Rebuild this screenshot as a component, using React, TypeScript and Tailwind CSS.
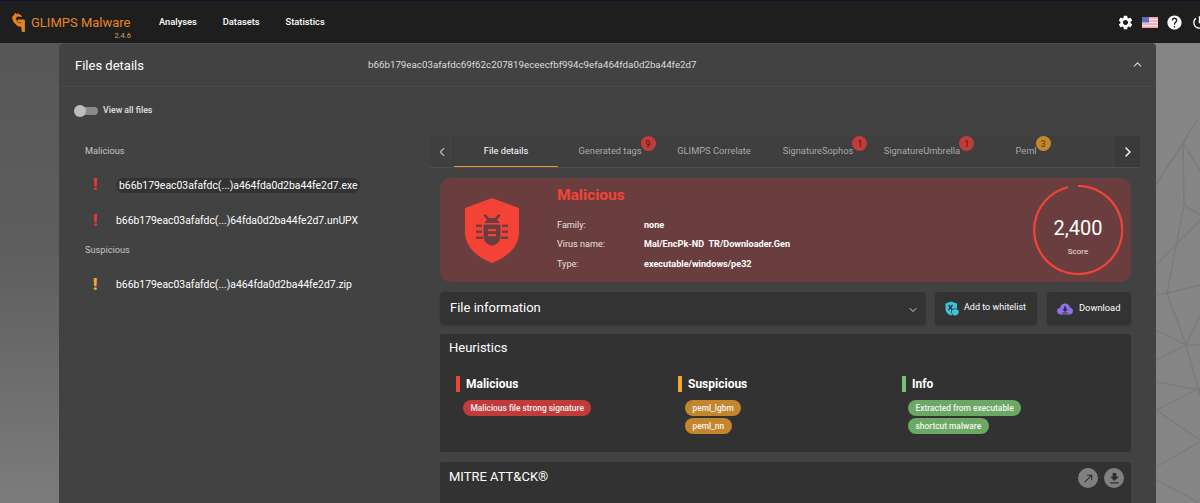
import { ChevronDown, ChevronLeft, ChevronRight, ChevronUp } from "lucide-react";
import { MdSettings, MdHelp, MdPowerSettingsNew, MdFileDownload, MdCallMade } from "react-icons/md";

function Tab({ label, n, color, text, active }: { label: string; n?: number; color?: string; text?: string; active?: boolean }) {
  return (
    <div className={`w-[104px] h-full shrink-0 flex items-center justify-center text-[9.3px] border-b-[1.5px] ${active ? "text-white border-b-[#e8952a]" : "text-[#a8a8a8] border-b-transparent"}`}>
      <span className="relative leading-[14px] whitespace-nowrap">
        {label}
        {n !== undefined ? (
          <span className={`absolute -top-[8px] -right-[14px] w-[15px] h-[15px] rounded-full flex items-center justify-center text-[8.5px] ${color} ${text}`}>
            {n}
          </span>
        ) : null}
      </span>
    </div>
  );
}

function FileRow({ name, color, pill }: { name: string; color: string; pill?: boolean }) {
  return (
    <div className="flex items-center h-[36px]">
      <span className={`w-[14px] ml-[29px] text-center font-black text-[17px] ${color}`}>!</span>
      {pill ? (
        <span className="text-[10.4px] text-white bg-[#333333] rounded-full px-[3px] ml-[14px] leading-[15px] whitespace-nowrap">{name}</span>
      ) : (
        <span className="text-[10.4px] text-white ml-[14px] whitespace-nowrap">{name}</span>
      )}
    </div>
  );
}

function HeurCol({ title, bar, pill, tags, width, indent }: { title: string; bar: string; pill: string; tags: string[]; width: string; indent: string }) {
  return (
    <div className={width}>
      <div className="flex items-center gap-[6px] h-[16px]">
        <span className={`w-[4px] h-[16px] ${bar}`} />
        <span className="text-[12px] font-bold text-white">{title}</span>
      </div>
      <div className={`flex flex-col items-start gap-[2px] mt-[8px] ${indent}`}>
        {tags.map((t) => (
          <span key={t} className={`h-[16px] rounded-full px-[7.5px] flex items-center text-[8.4px] font-medium text-[#f4f4f4] whitespace-nowrap ${pill}`}>{t}</span>
        ))}
      </div>
    </div>
  );
}

function InfoRow({ k, v }: { k: string; v: string }) {
  return (
    <div className="flex items-center h-[19.5px] text-[9.1px]">
      <span className="w-[87px] text-[#e8e0e0]">{k}</span>
      <span className="text-white font-bold whitespace-pre">{v}</span>
    </div>
  );
}

function Logo() {
  return (
    <svg width="13" height="19" viewBox="0 0 39 57" className="ml-[12px] shrink-0">
      <path d="M2 12 L8 5 L11 0 L11 5 L19 3 L29 10 L18 9 C13 10 11 13 11 17 C11 22 15 28 21 32 L29 32 L29 27 L18 27 L18 21 L37 21 L37 56 L31 56 L29 39 L19 39 C10 34 2 24 2 12 Z" fill="#e8831e" stroke="#e8831e" strokeWidth="3" strokeLinejoin="round" />
    </svg>
  );
}

export default function App() {
  return (
    <div className="h-[503px] w-[1200px] overflow-hidden bg-[#858585] font-['Roboto',sans-serif] relative">
      <div className="absolute left-0 top-0 w-[60px] h-[503px] bg-gradient-to-b from-[#565656] via-[#5e5e5e] to-[#7c7c7c]" />
      <svg width="44" height="503" viewBox="1156 0 44 503" fill="none" stroke="#7b7b7b" strokeWidth="1.5" className="absolute right-0 top-0">
        <path d="M1156 185 L1183 143 L1197 120 M1183 143 L1200 170 M1183 143 L1184 205 L1200 215 M1184 205 L1167 293 M1156 265 L1200 220 M1156 295 L1167 293 L1200 285 M1167 293 L1186 345 L1200 345 M1186 345 L1200 315 M1156 330 L1186 345 M1156 360 L1186 345 L1200 395 M1156 382 L1200 390 M1156 410 L1200 388 M1156 410 L1200 440 M1156 467 L1200 442 M1156 480 L1200 503" />
      </svg>

      <header className="relative h-[43px] bg-[#1e1e1e] border-t-[1px] border-[#14142a] flex items-center">
        <Logo />
        <div className="relative ml-[6px] w-[100px] shrink-0 leading-[18px]">
          <span className="text-[13px] text-[#e8861e] whitespace-nowrap">GLIMPS Malware</span>
          <span className="absolute right-0 top-[18px] leading-[10px] text-[7.5px] text-[#d0a468]">2.4.6</span>
        </div>
        <nav className="flex items-center ml-[28px] gap-[26px] text-[9.3px] font-medium text-white">
          <span>Analyses</span>
          <span>Datasets</span>
          <span>Statistics</span>
        </nav>
        <div className="ml-auto flex items-center text-white">
          <MdSettings size={17} className="mr-[8px]" />
          <svg width="16" height="11" viewBox="0 0 16 11" className="mr-[8px]">
            <rect width="16" height="11" fill="#f4a6ae" />
            <rect y="1.7" width="16" height="1.4" fill="#fde4e6" />
            <rect y="4.8" width="16" height="1.4" fill="#fde4e6" />
            <rect y="7.9" width="16" height="1.4" fill="#fde4e6" />
            <rect width="7" height="5.5" fill="#5b6fc0" />
          </svg>
          <MdHelp size={17} className="mr-[8px]" />
          <MdPowerSettingsNew size={17} className="mr-[-8px]" />
        </div>
      </header>

      <main className="relative ml-[59px] w-[1097px] h-[460px] bg-[#424242] rounded-t-[4px] border-t border-[#4d4d4d]">
        <div className="h-[43px] flex items-center border-b border-[#4a4a4a] px-[16px]">
          <span className="text-[13px] text-white w-[293px] mt-[1px]">Files details</span>
          <span className="text-[9.75px] text-[#dcdcdc] mt-[1px]">b66b179eac03afafdc69f62c207819eceecfbf994c9efa464fda0d2ba44fe2d7</span>
          <ChevronUp size={13} className="ml-auto -mr-[4px] -mt-[2px] text-[#d8d8d8]" strokeWidth={2} />
        </div>

        <div className="flex items-center h-[48px] mb-[1px] pl-[16px]">
          <span className="relative w-[23px] h-[8px] rounded-full bg-[#8a8a8a]">
            <span className="absolute -left-[1px] -top-[2px] w-[12px] h-[12px] rounded-full bg-[#bdbdbd]" />
          </span>
          <span className="ml-[5px] text-[8.8px] font-medium text-[#e0e0e0]">View all files</span>
        </div>

        <div className="flex">
          <div className="w-[371px] shrink-0 pt-[9px]">
            <div className="pl-[26px] h-[12px] flex items-center text-[9.2px] text-[#c4c4c4]">Malicious</div>
            <div className="h-[10px]" />
            <FileRow name="b66b179eac03afafdc(...)a464fda0d2ba44fe2d7.exe" color="text-[#e53935]" pill />
            <FileRow name="b66b179eac03afafdc(...)64fda0d2ba44fe2d7.unUPX" color="text-[#e53935]" />
            <div className="pl-[26px] h-[12px] mt-[5px] flex items-center text-[9.2px] text-[#c4c4c4]">Suspicious</div>
            <div className="h-[11px]" />
            <FileRow name="b66b179eac03afafdc(...)a464fda0d2ba44fe2d7.zip" color="text-[#f4a82e]" />
          </div>

          <div className="w-[710px] shrink-0">
            <div className="h-[32px] flex items-center border-b border-[#4f4f4f] bg-[#3f3f3f]">
              <div className="w-[24px] h-full flex items-center justify-center shrink-0 border-r border-[#393939]">
                <ChevronLeft size={14} className="text-[#b5b5b5]" />
              </div>
              <Tab label="File details" active />
              <Tab label="Generated tags" n={9} color="bg-[#c23b3b]" text="text-[#431010]" />
              <Tab label="GLIMPS Correlate" />
              <Tab label="SignatureSophos" n={1} color="bg-[#c23b3b]" text="text-[#431010]" />
              <Tab label="SignatureUmbrella" n={1} color="bg-[#c23b3b]" text="text-[#431010]" />
              <Tab label="Peml" n={3} color="bg-[#c4862c]" text="text-[#50320a]" />
              <div className="w-[25px] h-full flex items-center justify-center shrink-0 bg-[#3a3a3a] ml-auto">
                <ChevronRight size={16} className="text-white" />
              </div>
            </div>

            <div className="w-[691px] ml-[10px]">
              <div className="h-[104px] mt-[10px] rounded-[10px] bg-[#6a3e3e] flex items-center">
                <svg width="54" height="65" viewBox="0 0 54 65" className="ml-[25px] shrink-0">
                  <path d="M27 0 L54 10 V34 C54 50 40 60 27 65 C14 60 0 50 0 34 V10 Z" fill="#f44336" />
                  <g fill="#6a3e3e">
                    <path d="M18.5 17.5 L20.5 16 L24 20 L30 20 L33.5 16 L35.5 17.5 L32 22 C33.5 23 34 24 34.5 25 L19.5 25 C20 24 20.5 23 22 22 Z" />
                    <path d="M18.5 28 C18.5 26.5 19.5 26.5 21 26.5 L33 26.5 C34.5 26.5 35.5 26.5 35.5 28 L35.5 38 C35.5 44 31 47.5 27 47.5 C23 47.5 18.5 44 18.5 38 Z" />
                    <rect x="11" y="26.5" width="6" height="2.4" />
                    <rect x="37" y="26.5" width="6" height="2.4" />
                    <rect x="11" y="32.5" width="6" height="2.4" />
                    <rect x="37" y="32.5" width="6" height="2.4" />
                    <rect x="11" y="38.5" width="7" height="2.4" />
                    <rect x="36" y="38.5" width="7" height="2.4" />
                  </g>
                  <rect x="23" y="31" width="8" height="2.2" fill="#f44336" />
                  <rect x="23" y="36" width="8" height="2.2" fill="#f44336" />
                </svg>
                <div className="ml-[38px] self-start">
                  <div className="text-[15.5px] font-bold text-[#f44336] mt-[7px] leading-[20px]">Malicious</div>
                  <div className="mt-[11px]">
                    <InfoRow k="Family:" v="none" />
                    <InfoRow k="Virus name:" v="Mal/EncPk-ND  TR/Downloader.Gen" />
                    <InfoRow k="Type:" v="executable/windows/pe32" />
                  </div>
                </div>
                <div className="relative ml-auto mr-[8px] w-[90px] h-[90px] flex flex-col items-center">
                  <svg width="90" height="90" viewBox="0 0 90 90" className="absolute inset-0">
                    <circle cx="45" cy="45" r="44" fill="none" stroke="#5a4444" strokeWidth="2" />
                    <path d="M45 1 A44 44 0 1 1 35 2.2" fill="none" stroke="#f44336" strokeWidth="2.2" />
                  </svg>
                  <span className="text-[20px] text-white mt-[31px] leading-[24px]">2,400</span>
                  <span className="text-[8px] text-[#e8e0e0] mt-[6px]">Score</span>
                </div>
              </div>

              <div className="flex mt-[10px] h-[33px]">
                <div className="w-[486px] bg-[#333333] rounded-[4px] flex items-center pl-[10px] pr-[7px] shadow-sm">
                  <span className="text-[13px] text-white -mt-[1px]">File information</span>
                  <ChevronDown size={12} className="ml-auto mt-[3px] text-[#d0d0d0]" />
                </div>
                <div className="w-[102px] ml-[9px] bg-[#333333] rounded-[4px] flex items-center pl-[10px] shadow-sm">
                  <svg width="14" height="15" viewBox="0 0 14 15">
                    <path d="M6 0.5 L12 2.5 V8 C12 11 9 13.5 6 14.5 C3 13.5 0.5 11 0.5 8 V2.5 Z" fill="#3cc4d6" />
                    <path d="M3.5 4 L7.5 9 M7.5 4 L3.5 9" stroke="#333" strokeWidth="1.3" />
                    <path d="M10 7.5 L14 9 V11.5 C14 13 12 14.5 10 15 C8 14.5 6.5 13 6.5 11.5 V9 Z" fill="#3cc4d6" stroke="#333" strokeWidth="0.7" />
                  </svg>
                  <span className="ml-[5px] text-[9px] text-white whitespace-nowrap -mt-[1px]">Add to whitelist</span>
                </div>
                <div className="w-[84px] ml-[10px] bg-[#333333] rounded-[4px] flex items-center pl-[10px] shadow-sm">
                  <svg width="16" height="12" viewBox="0 0 16 12">
                    <path d="M4 11.5 C1.5 11.5 0 10 0 8 C0 6 1.5 5 3 5 C3.5 2 5.5 0.5 8 0.5 C10.5 0.5 12.5 2 13 4.5 C15 5 16 6.5 16 8 C16 10 14.5 11.5 12.5 11.5 Z" fill="#8e6fe8" />
                    <path d="M7 3.5 H9.2 V6 H11 L8 9 L5.2 6 H7 Z M5.5 9.5 H10.7 V10.5 H5.5 Z" fill="#333" />
                  </svg>
                  <span className="ml-[6px] text-[9.3px] text-white -mt-[1px]">Download</span>
                </div>
              </div>

              <div className="mt-[9px] h-[118px] bg-[#323232] rounded-[3px] pt-[5px] px-[9px]">
                <div className="text-[13px] text-white leading-[17px]">Heuristics</div>
                <div className="flex mt-[20px] ml-[7px]">
                  <HeurCol width="w-[222px]" indent="ml-[7px]" title="Malicious" bar="bg-[#f44336]" pill="bg-[#c23b3b]" tags={["Malicious file strong signature"]} />
                  <HeurCol width="w-[224px]" indent="ml-[7px]" title="Suspicious" bar="bg-[#f4a52e]" pill="bg-[#c4862c]" tags={["peml_lgbm", "peml_nn"]} />
                  <HeurCol width="w-[200px]" indent="ml-[6px]" title="Info" bar="bg-[#79c075]" pill="bg-[#6aa864]" tags={["Extracted from executable", "shortcut malware"]} />
                </div>
              </div>

              <div className="mt-[10px] h-[60px] bg-[#323232] rounded-[3px] pt-[6px] pl-[9px] pr-[7px] flex items-start">
                <span className="text-[13px] text-white leading-[17px]">MITRE ATT&amp;CK®</span>
                <div className="ml-auto flex gap-[6px]">
                  <span className="w-[20px] h-[20px] rounded-full bg-[#808080] flex items-center justify-center">
                    <MdCallMade size={13} className="text-[#2e2e2e]" />
                  </span>
                  <span className="w-[20px] h-[20px] rounded-full bg-[#808080] flex items-center justify-center">
                    <MdFileDownload size={15} className="text-[#2e2e2e]" />
                  </span>
                </div>
              </div>
            </div>
          </div>
        </div>
      </main>
    </div>
  );
}
